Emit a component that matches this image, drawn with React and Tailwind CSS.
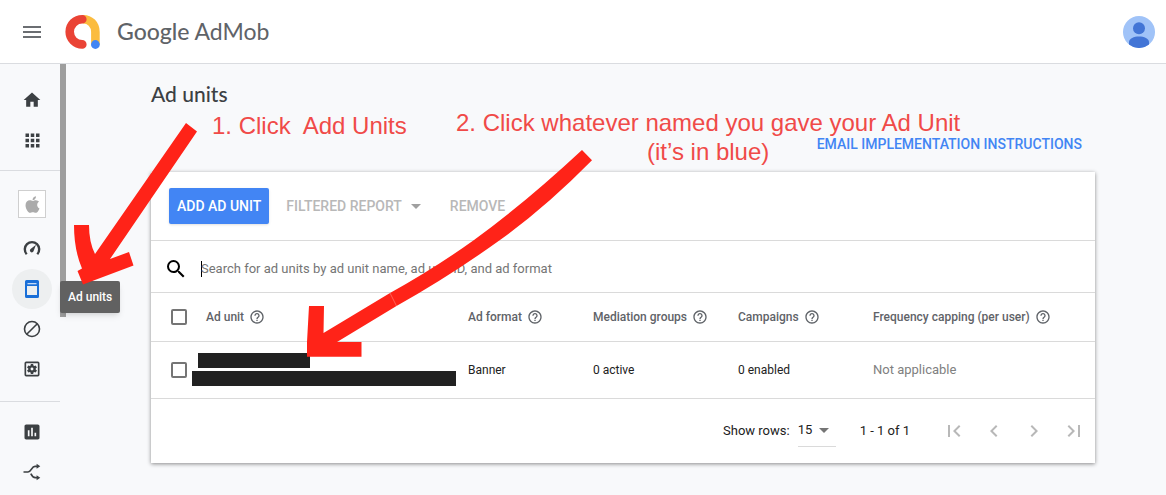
import {
  MdMenu, MdHome, MdApps, MdSearch, MdHelpOutline, MdArrowDropDown, MdFirstPage,
  MdChevronLeft, MdChevronRight, MdLastPage, MdInsertChart, MdOutlineSettingsApplications,
} from "react-icons/md";
import { FaApple } from "react-icons/fa";

function Logo() {
  return (
    <svg width="36" height="36" viewBox="0 0 36 36" fill="none" aria-hidden="true">
      <path d="M17.500 5.200C25 4.800 30.400 10.500 30.400 18V30.500" stroke="#fbbc3f" strokeWidth="8.600" />
      <path d="M17.300 5.200A12.600 12.600 0 0 0 17.300 30.400" stroke="#ea4335" strokeWidth="8.600" strokeLinecap="round" />
      <circle cx="30.400" cy="30.500" r="4.400" fill="#4285f4" />
    </svg>
  );
}

function GaugeIcon() {
  return (
    <svg width="20" height="20" viewBox="0 0 20 20" fill="none" aria-hidden="true">
      <path d="M4.700 15.200A7.200 7.200 0 1 1 15.300 15.200" stroke="currentColor" strokeWidth="2.400" />
      <path d="M14 5.800 11.600 12A1.900 1.900 0 1 1 8.600 10Z" fill="currentColor" />
    </svg>
  );
}

function DeviceIcon() {
  return (
    <svg width="20" height="20" viewBox="0 0 20 20" aria-hidden="true">
      <path fillRule="evenodd" fill="currentColor" d="M4.500 1h11A1.500 1.500 0 0 1 17 2.500v15a1.500 1.500 0 0 1-1.500 1.500h-11A1.500 1.500 0 0 1 3 17.500v-15A1.500 1.500 0 0 1 4.500 1ZM5 7v9h10V7Z" />
      <path d="M5.500 4h9v1.300h-9Z" fill="#c4daf7" />
    </svg>
  );
}

function BlockIcon() {
  return (
    <svg width="20" height="20" viewBox="0 0 20 20" fill="none" stroke="currentColor" strokeWidth="1.600" aria-hidden="true">
      <circle cx="10" cy="10" r="7.500" />
      <path d="M4.700 15.300 15.300 4.700" />
    </svg>
  );
}

function SplitIcon() {
  return (
    <svg width="20" height="20" viewBox="0 0 20 20" aria-hidden="true">
      <g fill="none" stroke="currentColor" strokeWidth="1.700">
        <path d="M1.500 10H6C9.500 10 9.500 4.300 13 4.300H15.500" />
        <path d="M8.800 11.600C10 14 11 15.700 13.200 15.700H15.500" />
      </g>
      <path d="M14.600 1.800 18.300 4.300 14.600 6.800ZM14.600 13.200 18.300 15.700 14.600 18.200Z" fill="currentColor" />
    </svg>
  );
}

function NavItem({ label, active, children }) {
  return (
    <a
      href="#"
      aria-label={label}
      className={
        active
          ? "ml-3 flex size-10 items-center justify-center rounded-full bg-[#edeff0] text-[#1a6fd8]"
          : "ml-3 flex size-10 items-center justify-center rounded-full text-[#3c4043]"
      }
    >
      {children}
    </a>
  );
}

function Sidebar() {
  return (
    <nav aria-label="Main" className="flex w-[60px] shrink-0 flex-col pt-4">
      <NavItem label="Home"><MdHome size={20} /></NavItem>
      <NavItem label="Apps"><MdApps size={21} /></NavItem>
      <hr className="mt-2.5 mb-[13px] w-full border-[#dadce0]" />
      <NavItem label="iOS app">
        <span className="flex size-7 items-center justify-center border border-[#cfcfcf] bg-white text-[#ababab]">
          <FaApple size={19} />
        </span>
      </NavItem>
      <div className="mt-[5px] flex flex-col">
        <NavItem label="App overview"><GaugeIcon /></NavItem>
        <div className="relative">
          <NavItem label="Ad units" active><DeviceIcon /></NavItem>
          <div role="tooltip" className="absolute top-3 left-full z-10 flex h-8 items-center rounded-xs bg-[#616161] px-2 text-xs font-medium whitespace-nowrap text-white shadow-md">
            Ad units
          </div>
        </div>
        <NavItem label="Blocking controls"><BlockIcon /></NavItem>
        <NavItem label="App settings"><MdOutlineSettingsApplications size={20} /></NavItem>
      </div>
      <hr className="mt-3 mb-2.5 w-full border-[#dadce0]" />
      <NavItem label="Reports"><MdInsertChart size={20} /></NavItem>
      <NavItem label="Mediation"><SplitIcon /></NavItem>
    </nav>
  );
}

function Check({ label }) {
  return (
    <input type="checkbox" aria-label={label} className="block size-4 appearance-none rounded-xs border-2 border-[#757575] bg-white" />
  );
}

function Head({ children, className }) {
  return (
    <th scope="col" className={className}>
      <span className="flex items-center gap-[5px] whitespace-nowrap">
        {children}
        <MdHelpOutline size={16} />
      </span>
    </th>
  );
}

function AdTable() {
  return (
    <table className="w-full table-fixed border-collapse text-left text-xs text-[#212121]">
      <colgroup>
        <col className="w-[41px]" />
        <col className="w-[276px]" />
        <col className="w-[125px]" />
        <col className="w-[145px]" />
        <col className="w-[135px]" />
        <col />
      </colgroup>
      <thead>
        <tr className="h-12 border-b border-[#dadada] text-[#5f6368]">
          <td className="pl-5"><Check label="Select all ad units" /></td>
          <Head className="pl-3.5 font-medium">Ad unit</Head>
          <Head className="font-medium">Ad format</Head>
          <Head className="font-medium">Mediation groups</Head>
          <Head className="font-medium">Campaigns</Head>
          <Head className="font-medium">Frequency capping (per user)</Head>
        </tr>
      </thead>
      <tbody>
        <tr className="h-[57px] border-b border-[#dadada]">
          <td className="pl-5"><Check label="Select ad unit" /></td>
          <td>
            <div className="flex flex-col gap-[3px]">
              <div className="ml-1.5 h-[15px] w-28 bg-[#212121]" />
              <div className="h-[15px] w-66 bg-[#212121]" />
            </div>
          </td>
          <td>Banner</td>
          <td>0 active</td>
          <td>0 enabled</td>
          <td className="text-[13px] text-[#808080]">Not applicable</td>
        </tr>
      </tbody>
    </table>
  );
}

function PageButton({ label, children }) {
  return (
    <button type="button" aria-label={label} className="flex size-10 items-center justify-center text-[#b8b8b8]">
      {children}
    </button>
  );
}

function Pager() {
  return (
    <div className="flex h-16 items-center justify-end pr-px text-[13px] text-[#212121]">
      <label htmlFor="rows" className="mr-2">Show rows:</label>
      <div className="relative mr-6 flex h-8 w-[38px] items-center border-b border-[#dadada]">
        <select id="rows" defaultValue="15" className="w-full appearance-none bg-transparent">
          <option>15</option>
          <option>30</option>
          <option>50</option>
        </select>
        <MdArrowDropDown size={24} className="pointer-events-none absolute right-0 text-[#757575]" />
      </div>
      <span className="mr-6">1 - 1 of 1</span>
      <PageButton label="First page"><MdFirstPage size={24} /></PageButton>
      <PageButton label="Previous page"><MdChevronLeft size={24} /></PageButton>
      <PageButton label="Next page"><MdChevronRight size={24} /></PageButton>
      <PageButton label="Last page"><MdLastPage size={24} /></PageButton>
    </div>
  );
}

function Annotations() {
  return (
    <div className="pointer-events-none absolute inset-0 z-20 overflow-hidden font-['Liberation_Sans',Arial,sans-serif] text-2xl/[29px] text-[#f04a48]">
      <svg width="640" height="400" viewBox="0 0 640 400" fill="#ff2318" className="absolute top-0 left-0" aria-hidden="true">
        <path d="M186 123 197 131.500 110 259 129 252 133.500 265.500 83 284.500 77.500 271 82 268.500Q74 250 74 225H89Q89 242 95 254Z" />
        <path d="M582 150 592 160.300Q545 208 500 240 450 276 396.500 306L337 342H361.500V356.700H307V342L309 306H324L323.500 333 390 293Q435 268 474 240 525 203 582 150Z" />
        <path d="M390 293 396.500 306" stroke="#ff8a80" strokeWidth="0.600" />
      </svg>
      <p className="absolute top-[111px] left-[212px] whitespace-pre">1. Click  Add Units</p>
      <p className="absolute top-[108px] left-[456px] text-center whitespace-nowrap">
        2. Click whatever named you gave your Ad Unit
        <br />
        (it’s in blue)
      </p>
    </div>
  );
}

export default function App() {
  return (
    <div className="relative flex min-h-screen flex-col bg-[#f8f9fb] font-[Roboto,sans-serif]">
      <header className="flex h-16 items-center border-b border-[#dadce0] bg-white pr-[11px] pl-5">
        <button type="button" aria-label="Menu" className="text-[#6b6e72]"><MdMenu size={24} /></button>
        <a href="#" className="ml-[21px] flex items-center gap-4 font-[Lato,sans-serif] text-[23px] text-[#5f6368]">
          <Logo />
          <span><span className="font-medium">Google</span> AdMob</span>
        </a>
        <button type="button" aria-label="Account" className="ml-auto">
          <svg width="32" height="32" viewBox="0 0 32 32" aria-hidden="true">
            <circle cx="16" cy="16" r="16" fill="#a0c3f8" />
            <circle cx="16" cy="12.300" r="6" fill="#4275d6" />
            <path d="M6 28.500V26C6 22.500 11 20.500 16 20.500S26 22.500 26 26V28.500A16 16 0 0 1 6 28.500Z" fill="#4275d6" />
          </svg>
        </button>
      </header>
      <div className="flex flex-1">
        <Sidebar />
        <div className="h-[253px] w-1.5 shrink-0 bg-[#9e9e9e]" />
        <main className="min-w-0 flex-1 pt-4 pr-[71px] pl-[85px]">
          <h1 className="font-[Lato,sans-serif] text-[21px]/[28px] font-medium text-[#3c4043]">Ad units</h1>
          <div className="flex h-16 items-center justify-end pt-2 pr-[13px]">
            <a href="#" className="text-sm font-medium text-[#4285f4]">EMAIL IMPLEMENTATION INSTRUCTIONS</a>
          </div>
          <section className="bg-white shadow-[0_1px_4px_rgba(0,0,0,0.45)]">
            <div className="flex h-[69px] items-center border-b border-[#dadada] pl-[18px] text-sm font-medium text-[#b8b8b8]">
              <button type="button" className="h-9 rounded-xs bg-[#4285f4] px-2 text-white shadow">ADD AD UNIT</button>
              <button type="button" className="ml-[17px] flex items-center">
                FILTERED REPORT
                <MdArrowDropDown size={24} className="ml-0.5 text-[#a0a0a0]" />
              </button>
              <button type="button" className="ml-[22px]">REMOVE</button>
            </div>
            <div className="flex h-[52px] items-center border-b border-[#dadada] pt-1 pl-[13px]">
              <MdSearch size={24} className="mr-[13px]" />
              <span className="h-4 w-px bg-black" />
              <input
                type="search"
                aria-label="Search ad units"
                placeholder="Search for ad units by ad unit name, ad unit ID, and ad format"
                className="-ml-px min-w-0 flex-1 text-[13px] outline-none placeholder:text-[#757575]"
              />
            </div>
            <AdTable />
            <Pager />
          </section>
        </main>
      </div>
      <Annotations />
    </div>
  );
}
